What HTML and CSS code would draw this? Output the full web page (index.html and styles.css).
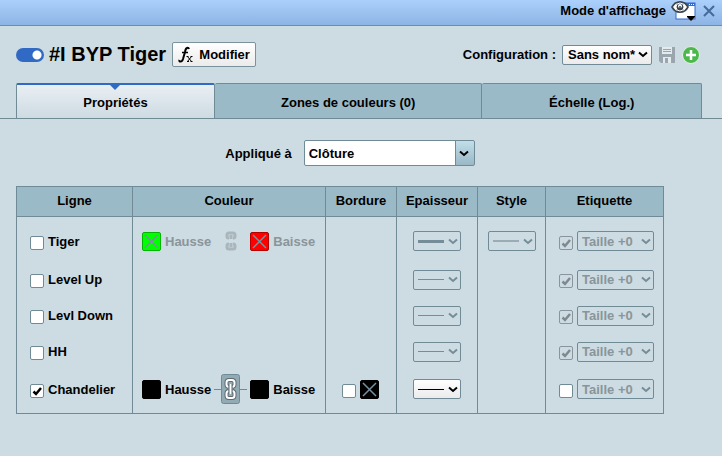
FILE: index.html
```html
<!DOCTYPE html>
<html lang="fr">
<head>
    <meta charset="UTF-8">
    <meta name="viewport" content="width=device-width, initial-scale=1.0">
    <title>#I BYP Tiger</title>
    <link rel="stylesheet" href="styles.css">
</head>
<body>
    <div class="topbar">
        <span>Mode d'affichage</span>
        <button class="icon-button" aria-label="Mode d'affichage">
            <svg width="26" height="20" viewBox="0 0 26 20">
                <rect x="5" y="2" width="19" height="16" fill="#fff" stroke="#2f6bd0"/>
                <path d="M5 2h19v3H5z" fill="#2f6bd0"/>
                <path d="M18 3.500h1M20 3.500h1M22 3.500h1" stroke="#fff"/>
                <path d="M0 6Q3 0 9 0T18 6Q15 12 9 12T0 6z" fill="#3b4650"/>
                <path d="M2 6Q4 3 6 2Q4 6 6 10Q4 9 2 6zM16 6Q14 3 12 2Q14 6 12 10Q14 9 16 6z" fill="#fff"/>
                <circle cx="9" cy="6" r="4" fill="#3b4650" stroke="#fff"/>
                <circle cx="9" cy="5" r="2" fill="#fff"/>
                <circle cx="9" cy="6" r="1" fill="#3b4650"/>
                <path d="M16 15h8v1l-4 4-4-4z" fill="#000"/>
            </svg>
        </button>
        <button class="icon-button" aria-label="Fermer">
            <svg width="14" height="14" viewBox="0 0 14 14"><path d="M2 2l10 10M12 2L2 12" stroke="#44699a" stroke-width="2"/></svg>
        </button>
    </div>

    <div class="header">
        <input type="checkbox" class="toggle" id="actif" aria-label="Activer l'indicateur" checked>
        <h1>#I BYP Tiger</h1>
        <button class="modifier">
            <svg width="16" height="18" viewBox="0 0 16 18" fill="none" stroke="#000">
                <path d="M11 3Q10.500 1.500 9 2Q7.500 2.500 7 6L5 13Q4 16 2 15.500Q1 15 1.500 14" stroke-width="2"/>
                <path d="M4 6.500h6" stroke-width="1.500"/>
                <path d="M9.500 10.500l4 5M9 15.500h2M12.500 10.500h2M13.500 10.500l-4 5M8.500 10.500h2M12.500 15.500h2"/>
            </svg>
            Modifier
        </button>
        <div class="configuration">
            <label for="configuration">Configuration :</label>
            <select id="configuration" class="select">
                <option>Sans nom*</option>
            </select>
            <button class="icon-button save" aria-label="Enregistrer" disabled>
                <svg width="18" height="18" viewBox="0 0 18 18">
                    <path d="M1 1h16v16H3l-2-2z" fill="#9aa5ae"/>
                    <path d="M4 1h10v7H4z" fill="#e4ebef"/>
                    <path d="M5 3.500h8M5 5.500h8" stroke="#9aa5ae"/>
                    <path d="M5 11h8v6H5z" fill="#e4ebef"/>
                    <path d="M7 12h3v5H7z" fill="#9aa5ae"/>
                </svg>
            </button>
            <button class="icon-button" aria-label="Ajouter">
                <svg width="18" height="18" viewBox="0 0 18 18">
                    <circle cx="9" cy="9" r="8.500" fill="#4cb84c" stroke="#e3f1e6"/>
                    <path d="M9 4v10M4 9h10" stroke="#fff" stroke-width="2.500"/>
                </svg>
            </button>
        </div>
    </div>

    <div class="tabs" role="tablist">
        <button class="tab active" role="tab" aria-selected="true">Propriétés</button>
        <button class="tab" role="tab" aria-selected="false">Zones de couleurs (0)</button>
        <button class="tab" role="tab" aria-selected="false">Échelle (Log.)</button>
    </div>

    <div class="applique">
        <label for="applique">Appliqué à</label>
        <select id="applique" class="combo">
            <option>Clôture</option>
        </select>
    </div>

    <table class="lignes">
        <thead>
            <tr>
                <th class="col-ligne">Ligne</th>
                <th class="col-couleur">Couleur</th>
                <th class="col-bordure">Bordure</th>
                <th class="col-epaisseur">Epaisseur</th>
                <th class="col-style">Style</th>
                <th class="col-etiquette">Etiquette</th>
            </tr>
        </thead>
        <tbody>
            <tr>
                <td><div class="ligne"><input type="checkbox" class="case" id="tiger"><label for="tiger">Tiger</label></div></td>
                <td>
                    <div class="couleurs">
                        <button class="couleur" disabled><svg class="carre vert" viewBox="0 0 17 17"><path d="M2 2l13 13M15 2L2 15"/></svg>Hausse</button>
                        <button class="lien" aria-label="Lier les couleurs" disabled>
                            <svg width="12" height="20" viewBox="0 0 12 20">
                                <path class="maillon" d="M4 7H3.500Q2 7 2 5V4Q2 2 4 2H8Q10 2 10 4V5Q10 7 8.500 7H8M4 13H3.500Q2 13 2 15V16Q2 18 4 18H8Q10 18 10 16V15Q10 13 8.500 13H8M6 4V8M6 12V16"/>
                            </svg>
                        </button>
                        <button class="couleur" disabled><svg class="carre rouge" viewBox="0 0 17 17"><path d="M2 2l13 13M15 2L2 15"/></svg>Baisse</button>
                    </div>
                </td>
                <td></td>
                <td class="centre"><select class="select trait epais" aria-label="Epaisseur Tiger" disabled><option></option></select></td>
                <td class="centre"><select class="select trait moyen" aria-label="Style Tiger" disabled><option></option></select></td>
                <td>
                    <div class="etiquette">
                        <input type="checkbox" class="case" aria-label="Etiquette Tiger" checked disabled>
                        <select class="select taille" aria-label="Taille Tiger" disabled><option>Taille +0</option></select>
                    </div>
                </td>
            </tr>
            <tr>
                <td><div class="ligne"><input type="checkbox" class="case" id="level-up"><label for="level-up">Level Up</label></div></td>
                <td></td>
                <td></td>
                <td class="centre"><select class="select trait" aria-label="Epaisseur Level Up" disabled><option></option></select></td>
                <td></td>
                <td>
                    <div class="etiquette">
                        <input type="checkbox" class="case" aria-label="Etiquette Level Up" checked disabled>
                        <select class="select taille" aria-label="Taille Level Up" disabled><option>Taille +0</option></select>
                    </div>
                </td>
            </tr>
            <tr class="serree">
                <td><div class="ligne"><input type="checkbox" class="case" id="levl-down"><label for="levl-down">Levl Down</label></div></td>
                <td></td>
                <td></td>
                <td class="centre"><select class="select trait" aria-label="Epaisseur Levl Down" disabled><option></option></select></td>
                <td></td>
                <td>
                    <div class="etiquette">
                        <input type="checkbox" class="case" aria-label="Etiquette Levl Down" checked disabled>
                        <select class="select taille" aria-label="Taille Levl Down" disabled><option>Taille +0</option></select>
                    </div>
                </td>
            </tr>
            <tr>
                <td><div class="ligne"><input type="checkbox" class="case" id="hh"><label for="hh">HH</label></div></td>
                <td></td>
                <td></td>
                <td class="centre"><select class="select trait" aria-label="Epaisseur HH" disabled><option></option></select></td>
                <td></td>
                <td>
                    <div class="etiquette">
                        <input type="checkbox" class="case" aria-label="Etiquette HH" checked disabled>
                        <select class="select taille" aria-label="Taille HH" disabled><option>Taille +0</option></select>
                    </div>
                </td>
            </tr>
            <tr>
                <td><div class="ligne"><input type="checkbox" class="case" id="chandelier" checked><label for="chandelier">Chandelier</label></div></td>
                <td>
                    <div class="couleurs">
                        <button class="couleur"><svg class="carre noir" viewBox="0 0 17 17"></svg>Hausse</button>
                        <button class="lien actif" aria-label="Lier les couleurs">
                            <svg width="19" height="30" viewBox="0 0 19 30">
                                <rect x="0.500" y="0.500" width="18" height="29" rx="2" fill="#92aab4" stroke="#708b96"/>
                                <path class="contour" d="M7.500 13Q5.500 12.500 5.500 10.500V8.500Q5.500 6 8 6H11Q13.500 6 13.500 8.500V10.500Q13.500 12.500 11.500 13M7.500 17Q5.500 17.500 5.500 19.500V21.500Q5.500 24 8 24H11Q13.500 24 13.500 21.500V19.500Q13.500 17.500 11.500 17"/>
                                <path class="anneau" d="M7.500 13Q5.500 12.500 5.500 10.500V8.500Q5.500 6 8 6H11Q13.500 6 13.500 8.500V10.500Q13.500 12.500 11.500 13M7.500 17Q5.500 17.500 5.500 19.500V21.500Q5.500 24 8 24H11Q13.500 24 13.500 21.500V19.500Q13.500 17.500 11.500 17"/>
                                <path class="contour" d="M9.500 10V20"/>
                                <path class="anneau" d="M9.500 10V20"/>
                            </svg>
                        </button>
                        <button class="couleur"><svg class="carre noir" viewBox="0 0 17 17"></svg>Baisse</button>
                    </div>
                </td>
                <td>
                    <div class="bordure">
                        <input type="checkbox" class="case" aria-label="Bordure Chandelier">
                        <button class="couleur" aria-label="Couleur de bordure"><svg class="carre noir" viewBox="0 0 17 17"><path d="M2 2l13 13M15 2L2 15"/></svg></button>
                    </div>
                </td>
                <td class="centre"><select class="select trait" aria-label="Epaisseur Chandelier"><option></option></select></td>
                <td></td>
                <td>
                    <div class="etiquette">
                        <input type="checkbox" class="case" aria-label="Etiquette Chandelier">
                        <select class="select taille" aria-label="Taille Chandelier" disabled><option>Taille +0</option></select>
                    </div>
                </td>
            </tr>
        </tbody>
    </table>
</body>
</html>
```
FILE: styles.css
```css
* {
    box-sizing: border-box;
}
body {
    --fleche: url("data:image/svg+xml,%3Csvg xmlns='http://www.w3.org/2000/svg' width='10' height='7'%3E%3Cpath d='M1 1.500l4 3.500 4-3.500' fill='none' stroke='black' stroke-width='2'/%3E%3C/svg%3E");
    --fleche-grise: url("data:image/svg+xml,%3Csvg xmlns='http://www.w3.org/2000/svg' width='10' height='7'%3E%3Cpath d='M1 1.500l4 3.500 4-3.500' fill='none' stroke='%23758d98' stroke-width='2'/%3E%3C/svg%3E");
    margin: 0;
    background-color: #cddbe2;
    color: #000;
    font-family: "Liberation Sans", Arial, sans-serif;
    font-size: 13px;
    font-weight: bold;
}
button, select, input {
    margin: 0;
    padding: 0;
    font: inherit;
    color: inherit;
}
button {
    border: none;
    background: none;
    cursor: pointer;
}
svg {
    display: block;
}

.topbar {
    display: flex;
    justify-content: flex-end;
    align-items: center;
    gap: 5px;
    height: 26px;
    padding: 0 6px 4px 16px;
    background: linear-gradient(#abd0fc, #8db4e4);
    border-bottom: 1px solid #708cad;
}

/* titre + configuration */
.header {
    display: flex;
    align-items: center;
    height: 57px;
    padding: 0 22px 0 16px;
}
.toggle {
    appearance: none;
    width: 28px;
    height: 14px;
    margin-right: 5px;
    border-radius: 7px;
    background: radial-gradient(circle at 21px 7px, #fff 4px, #316ac5 5px);
}
h1 {
    margin: 0 6px 0 0;
    font-size: 20px;
}
.modifier {
    display: flex;
    align-items: center;
    justify-content: center;
    gap: 5px;
    width: 84px;
    height: 25px;
    border: 1px solid #7a929c;
    border-radius: 2px;
    background: linear-gradient(#fff, #ebebeb);
}
.configuration {
    display: flex;
    align-items: center;
    gap: 6px;
    margin-left: auto;
}

/* listes */
.select {
    appearance: none;
    display: block;
    width: 90px;
    height: 20px;
    padding: 0 5px;
    border: 1px solid #708b96;
    border-radius: 2px;
    background: var(--fleche) no-repeat right 2px center, linear-gradient(#fff, #ebebeb);
}
.select:disabled {
    opacity: 1;
    color: #89959b;
    background: var(--fleche-grise) no-repeat right 2px center;
}
.trait {
    --epaisseur: 1px;
    --couleur: #758d98;
    width: 48px;
    background: var(--fleche) no-repeat right 2px center, linear-gradient(#000, #000) no-repeat 4px center / 26px var(--epaisseur), linear-gradient(#fff, #ebebeb);
}
.trait:disabled {
    background: var(--fleche-grise) no-repeat right 2px center, linear-gradient(var(--couleur), var(--couleur)) no-repeat 4px center / 26px var(--epaisseur);
}
.trait.epais {
    --epaisseur: 3px;
}
.trait.moyen {
    --epaisseur: 2px;
    --couleur: #9bacb5;
}
.taille {
    width: 77px;
    padding: 0 4px;
}
.configuration .select {
    background-position: right 3px center, 0 0;
}
.combo {
    appearance: none;
    width: 171px;
    height: 26px;
    padding: 0 22px 0 4px;
    border: 1px solid #708b96;
    border-radius: 2px;
    background:
        var(--fleche) no-repeat right 5px center,
        linear-gradient(#708b96, #708b96) no-repeat right 18px top / 1px 100%,
        linear-gradient(#c0dfea, #9ab8c5) no-repeat right top / 18px 100%,
        #fff;
}

/* onglets */
.tabs {
    display: grid;
    grid-template-columns: 29fr 39fr 32fr;
    padding: 0 20px 0 16px;
    border-bottom: 1px solid #708b96;
}
.tab {
    position: relative;
    height: 35px;
    padding-top: 3px;
    border: 1px solid #708b96;
    border-bottom: none;
    border-left: none;
    border-radius: 2px 2px 0 0;
    background-color: #9bbac7;
}
.tab.active {
    padding-top: 2px;
    border-top: 2px solid #316ac5;
    border-left: 1px solid #708b96;
    background: linear-gradient(#e9eff3, #cddbe2);
}
.tab.active::before {
    content: "";
    position: absolute;
    top: 0;
    left: 50%;
    margin-left: -5px;
    border: 5px solid transparent;
    border-top-color: #316ac5;
    border-bottom: none;
}

.applique {
    display: flex;
    justify-content: center;
    align-items: center;
    gap: 12px;
    padding: 21px 22px 20px 0;
}

/* tableau des lignes */
.lignes {
    margin: 0 16px;
    border-collapse: collapse;
    border: 1px solid #708b96;
}
th {
    height: 30px;
    padding: 0 0 2px;
    border: 1px solid #708b96;
    background-color: #9bbac7;
}
td {
    height: 38px;
    padding: 0;
    border-left: 1px solid #708b96;
}
.serree td {
    height: 34px;
}
tbody tr:first-child td {
    height: 44px;
    padding-top: 5px;
}
tbody tr:last-child td {
    height: 43px;
    padding-bottom: 5px;
}
.col-ligne { width: 116px; }
.col-couleur { width: 193px; }
.col-bordure { width: 71px; }
.col-epaisseur { width: 81px; }
.col-style { width: 68px; }
.col-etiquette { width: 118px; }

.ligne, .etiquette, .bordure {
    display: flex;
    align-items: center;
    gap: 4px;
    padding-left: 13px;
}
.bordure {
    padding-left: 16px;
}
.centre .select {
    margin: 0 auto;
}
.case {
    appearance: none;
    width: 14px;
    height: 14px;
    margin-top: 3px;
    border: 1px solid #708b96;
    border-radius: 2px;
    background-color: #fff;
}
.case:checked {
    background: #fff url("data:image/svg+xml,%3Csvg xmlns='http://www.w3.org/2000/svg' width='12' height='12'%3E%3Cpath d='M2.500 6.500l2.500 2.500L10 3' fill='none' stroke='black' stroke-width='2.500'/%3E%3C/svg%3E") no-repeat center;
}
.case:checked:disabled {
    border-color: #89959b;
    background: url("data:image/svg+xml,%3Csvg xmlns='http://www.w3.org/2000/svg' width='12' height='12'%3E%3Cpath d='M2.500 6.500l2.500 2.500L10 3' fill='none' stroke='%237f898e' stroke-width='2.500'/%3E%3C/svg%3E") no-repeat center;
}

.couleurs {
    display: flex;
    align-items: center;
    gap: 3px;
    padding-left: 9px;
}
.couleur {
    display: flex;
    align-items: center;
    gap: 4px;
}
.couleur:disabled {
    color: #89959b;
}
.carre {
    width: 19px;
    height: 19px;
    border: 1px solid #000;
    border-radius: 2px;
    fill: none;
    stroke: #78929d;
    stroke-width: 1.5;
}
.vert {
    background-color: #00ff00;
    border-color: #00b400;
}
.rouge {
    background-color: #ff0000;
    border-color: #b40000;
}
.noir {
    background-color: #000;
}
.lien {
    display: flex;
    justify-content: center;
    width: 33px;
}
.lien.actif {
    background: linear-gradient(#708b96, #708b96) no-repeat center / 100% 1px;
}
.maillon {
    fill: none;
    stroke: #a9b6bc;
    stroke-width: 3;
}
.contour {
    fill: none;
    stroke: #5d6a70;
    stroke-width: 4;
}
.anneau {
    fill: none;
    stroke: #fff;
    stroke-width: 2;
}
```
